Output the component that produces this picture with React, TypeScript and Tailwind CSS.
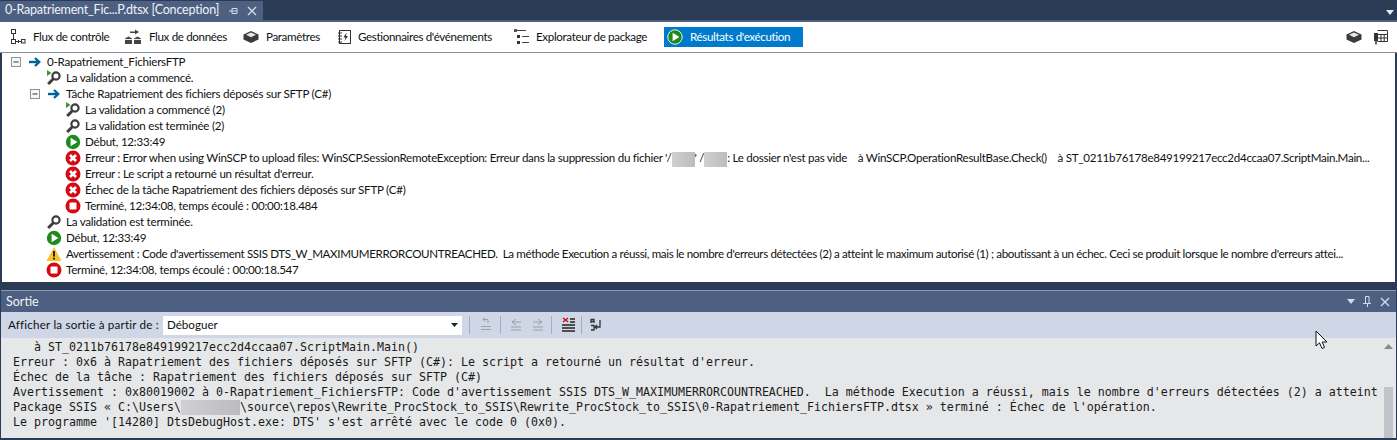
import type { ReactNode } from 'react'

function Expander({ className = '' }: { className?: string }) {
  return (
    <svg width="11" height="11" viewBox="0 0 11 11" className={className}>
      <rect x="0.5" y="0.5" width="9" height="9" fill="#f4f6f8" stroke="#8a93a3" />
      <path d="M2.5 5H7.5" stroke="#333" />
    </svg>
  )
}

function ArrowIcon() {
  return (
    <svg width="14" height="12" viewBox="0 0 14 12" fill="none" stroke="#00639c">
      <path d="M1 6H11" strokeWidth="2.4" />
      <path d="M7 2L11.2 6L7 10" strokeWidth="2.4" />
    </svg>
  )
}

function KeyIcon({ started }: { started?: boolean }) {
  return (
    <svg width="16" height="16" viewBox="0 0 16 16">
      <circle cx="10" cy="6" r="3.6" fill="none" stroke="#3d3d3d" strokeWidth="2.2" />
      <path d="M7.4 8.8L2.2 14" stroke="#3d3d3d" strokeWidth="3" />
      {started && <path d="M1 0V6L5.5 3Z" fill="#2f9e2f" />}
    </svg>
  )
}

function PlayIcon({ ring }: { ring?: boolean }) {
  return (
    <svg width="16" height="16" viewBox="0 0 16 16">
      <circle cx="8" cy="8" r="7.2" fill="#1e8a1e" stroke={ring ? '#e8f2e8' : 'none'} strokeWidth={ring ? 1 : 0} />
      <path d="M5.6 3.8V12.2L12.4 8Z" fill="#fff" />
    </svg>
  )
}

function ErrorIcon() {
  return (
    <svg width="16" height="16" viewBox="0 0 16 16">
      <circle cx="8" cy="8" r="7.5" fill="#d60a14" />
      <path d="M5 5L11 11M11 5L5 11" stroke="#fff" strokeWidth="2.6" />
    </svg>
  )
}

function StopIcon() {
  return (
    <svg width="16" height="16" viewBox="0 0 16 16">
      <circle cx="8" cy="8" r="7.5" fill="#d60a14" />
      <rect x="4.5" y="4.5" width="7" height="7" rx="1" fill="#fff" />
    </svg>
  )
}

function WarnIcon() {
  return (
    <svg width="16" height="16" viewBox="0 0 16 16">
      <path d="M8 1L15.5 15H0.5Z" fill="#f7c325" />
      <path d="M8 5V10.5M8 11.8V13.6" stroke="#222" strokeWidth="2" />
    </svg>
  )
}

function FlowIcon() {
  return (
    <svg width="16" height="16" viewBox="0 0 16 16" fill="none" stroke="#333">
      <rect x="1.5" y="0.5" width="4" height="4" />
      <rect x="1.5" y="10.5" width="4" height="4" />
      <rect x="11.5" y="10.5" width="3.5" height="3.5" />
      <path d="M3.5 5V10M6 12.5H11M8.5 11V14" />
    </svg>
  )
}

function DataIcon() {
  return (
    <svg width="16" height="16" viewBox="0 0 16 16">
      <path d="M5 2.5H10V0.5L14 3L10 5.5V4H5Z" fill="#444" />
      <path d="M0 9.5L3.5 7.5L7 9.5V15H0ZM9 9.5L12.5 7.5L16 9.5V15H9Z" fill="#444" />
      <path d="M0 10.5H7M9 10.5H16" stroke="#eee" />
    </svg>
  )
}

function BoxIcon() {
  return (
    <svg width="16" height="14" viewBox="0 0 16 14">
      <path d="M8 1L15.5 4.5V9.5L8 13L0.5 9.5V4.5Z" fill="#3b3b3b" />
      <path d="M8 2.5L13 4.8L8 7.2L3 4.8Z" fill="#e8e8e8" />
    </svg>
  )
}

function HandlerIcon() {
  return (
    <svg width="13" height="14" viewBox="0 0 13 14">
      <rect x="1.5" y="0.5" width="11" height="13" fill="none" stroke="#333" />
      <path d="M0 3H4M0 6H4M0 9H4M0 12H4" stroke="#333" />
      <path d="M8.5 2.5L5.5 7.5H7.5L6.5 11L10 6H8Z" fill="#333" />
    </svg>
  )
}

function ExplorerIcon() {
  return (
    <svg width="15" height="15" viewBox="0 0 15 15">
      <rect x="0" y="0" width="3" height="3" fill="#555" />
      <rect x="3" y="6" width="3" height="3" fill="#333" />
      <rect x="3" y="12" width="3" height="3" fill="#333" />
      <path d="M3 1.5H12M8 7.5H15M8 13.5H15" stroke="#444" />
    </svg>
  )
}

function GridIcon() {
  return (
    <svg width="15" height="15" viewBox="0 0 15 15" fill="none" stroke="#333">
      <path d="M4.5 0.5H14.5V11.5H4.5M4.5 4.5H14.5M4.5 8H14.5M8 4.5V11.5M11.2 4.5V11.5" />
      <path d="M3 3V11" stroke="#333" strokeWidth="4" />
      <path d="M3 11V14.5" strokeWidth="1.5" />
    </svg>
  )
}

function Redacted({ w, h = 'h-[15px]' }: { w: string; h?: string }) {
  return <span className={`inline-block align-middle bg-gradient-to-r from-[#d0d0d2] to-[#bcbcbe] ${w} ${h}`} />
}

type Row = { level: number; icon: ReactNode; text: ReactNode; toggle?: boolean; textCls?: string }

const rows: Row[] = [
  { level: 0, toggle: true, icon: <ArrowIcon />, text: '0-Rapatriement_FichiersFTP' },
  { level: 1, icon: <KeyIcon started />, text: 'La validation a commencé.' },
  { level: 1, toggle: true, icon: <ArrowIcon />, text: 'Tâche Rapatriement des fichiers déposés sur SFTP (C#)' },
  { level: 2, icon: <KeyIcon started />, text: 'La validation a commencé (2)' },
  { level: 2, icon: <KeyIcon />, text: 'La validation est terminée (2)' },
  { level: 2, icon: <PlayIcon />, text: 'Début, 12:33:49' },
  {
    level: 2,
    icon: <ErrorIcon />,
    textCls: 'tracking-[-0.29px]',
    text: (
      <>
        Erreur : Error when using WinSCP to upload files: WinSCP.SessionRemoteException: Erreur dans la suppression du fichier '/<Redacted w="w-[23px]" />' /<Redacted w="w-[23px]" />: Le dossier n'est pas vide    à WinSCP.OperationResultBase.Check()    à ST_0211b76178e849199217ecc2d4ccaa07.ScriptMain.Main...
      </>
    ),
  },
  { level: 2, icon: <ErrorIcon />, text: "Erreur : Le script a retourné un résultat d'erreur." },
  { level: 2, icon: <ErrorIcon />, text: 'Échec de la tâche Rapatriement des fichiers déposés sur SFTP (C#)' },
  { level: 2, icon: <StopIcon />, text: 'Terminé, 12:34:08, temps écoulé : 00:00:18.484' },
  { level: 1, icon: <KeyIcon />, text: 'La validation est terminée.' },
  { level: 1, icon: <PlayIcon />, text: 'Début, 12:33:49' },
  {
    level: 1,
    icon: <WarnIcon />,
    textCls: 'tracking-[-0.36px]',
    text: "Avertissement : Code d'avertissement SSIS DTS_W_MAXIMUMERRORCOUNTREACHED.  La méthode Execution a réussi, mais le nombre d'erreurs détectées (2) a atteint le maximum autorisé (1) ; aboutissant à un échec. Ceci se produit lorsque le nombre d'erreurs attei...",
  },
  { level: 1, icon: <StopIcon />, text: 'Terminé, 12:34:08, temps écoulé : 00:00:18.547' },
]

const tabs = [
  { label: 'Flux de contrôle', icon: <FlowIcon />, cls: 'w-[115px] gap-[7px]' },
  { label: 'Flux de données', icon: <DataIcon />, cls: 'w-[118px] gap-[8px]' },
  { label: 'Paramètres', icon: <BoxIcon />, cls: 'w-[95px] gap-[7px]' },
  { label: "Gestionnaires d'événements", icon: <HandlerIcon />, cls: 'w-[176px] gap-[7px]' },
  { label: 'Explorateur de package', icon: <ExplorerIcon />, cls: 'w-[150px] gap-[7px]' },
]

const outputLines: ReactNode[] = [
  '   à ST_0211b76178e849199217ecc2d4ccaa07.ScriptMain.Main()',
  "Erreur : 0x6 à Rapatriement des fichiers déposés sur SFTP (C#): Le script a retourné un résultat d'erreur.",
  'Échec de la tâche : Rapatriement des fichiers déposés sur SFTP (C#)',
  "Avertissement : 0x80019002 à 0-Rapatriement_FichiersFTP: Code d'avertissement SSIS DTS_W_MAXIMUMERRORCOUNTREACHED.  La méthode Execution a réussi, mais le nombre d'erreurs détectées (2) a atteint",
  <>
    Package SSIS « C:\Users\<Redacted w="w-[59px]" />\source\repos\Rewrite_ProcStock_to_SSIS\Rewrite_ProcStock_to_SSIS\0-Rapatriement_FichiersFTP.dtsx » terminé : Échec de l'opération.
  </>,
  "Le programme '[14280] DtsDebugHost.exe: DTS' s'est arrêté avec le code 0 (0x0).",
]

export default function App() {
  return (
    <div className="relative w-[1397px] h-[440px] overflow-hidden bg-[#2b3a55] font-['Lato',sans-serif] text-[11.6px] text-[#111]">
      {/* Document tab */}
      <div className="flex h-[20px] items-end justify-between pr-[2px]">
        <div className="flex h-[19px] w-[263px] items-center bg-[#4d6082] pl-[5px] text-[12.5px] tracking-[-0.2px] text-[#f0f2f6]">
          <span className="w-[222px] whitespace-pre">0-Rapatriement_Fic...P.dtsx [Conception]</span>
          <svg width="10" height="10" viewBox="0 0 10 10" className="ml-[2px]" stroke="#d5dbe6" fill="none">
            <path d="M0 5H3M3 2.5V7.5H8V2.5ZM3 5H8" />
          </svg>
          <svg width="10" height="10" viewBox="0 0 10 10" className="ml-[8px]" stroke="#d5dbe6" strokeWidth="1.4">
            <path d="M1 1L9 9M9 1L1 9" />
          </svg>
        </div>
        <svg width="8" height="5" viewBox="0 0 8 5" className="mb-[5px] mr-[1px]">
          <path d="M0 0H8L4 5Z" fill="#e5e9f0" />
        </svg>
      </div>

      {/* Designer */}
      <div className="h-[2px] bg-[#4d6082]" />
      <div className="flex h-[31px] items-center justify-between border-b border-[#8a8f9a] bg-white pl-[10px] pr-[9px] tracking-[-0.35px]">
        <div className="flex items-center">
          {tabs.map((t) => (
            <div key={t.label} className={`flex items-center whitespace-nowrap ${t.cls}`}>
              {t.icon}
              <span className="pb-[1px]">{t.label}</span>
            </div>
          ))}
          <div className="flex h-[20px] w-[139px] items-center gap-[7px] whitespace-nowrap bg-[#007acc] pl-[3px] text-white">
            <PlayIcon ring />
            <span className="pb-[1px]">Résultats d'exécution</span>
          </div>
        </div>
        <div className="flex items-center gap-[11px]">
          <BoxIcon />
          <GridIcon />
        </div>
      </div>

      {/* Results tree */}
      <div className="mx-[2px] h-[229px] overflow-hidden bg-white pl-[9px] pr-[20px] pt-[1px] tracking-[-0.24px]">
        {rows.map((r, i) => (
          <div
            key={i}
            className={`flex h-[16px] items-center whitespace-pre ${r.level === 0 ? 'pl-0' : r.level === 1 ? (r.toggle ? 'pl-[19px]' : 'pl-[35px]') : 'pl-[54px]'}`}
          >
            {r.toggle && <Expander className="mr-[6px] shrink-0" />}
            <span className={`flex shrink-0 justify-center ${r.toggle ? 'w-[14px] mr-[5px]' : 'w-[16px] mr-[4px]'}`}>{r.icon}</span>
            <span className={r.textCls}>{r.text}</span>
          </div>
        ))}
      </div>

      <div className="h-[8px] bg-[#2b3a55]" />

      {/* Output window */}
      <div className="mx-[1px] flex h-[148px] flex-col border-t border-[#8b9ab8]">
        <div className="flex h-[21px] items-center justify-between bg-[#4d6082] pl-[5px] pr-[6px] text-[12.5px] text-[#f0f2f6]">
          <span className="pt-[1px]">Sortie</span>
          <div className="flex items-center gap-[8px]">
            <svg width="8" height="5" viewBox="0 0 8 5">
              <path d="M0 0H8L4 5Z" fill="#d5dbe6" />
            </svg>
            <svg width="9" height="11" viewBox="0 0 9 11" stroke="#d5dbe6" fill="none">
              <path d="M0 7.5H8M2.5 0.5H6V7.5H2.5ZM4.5 8V11" />
            </svg>
            <svg width="10" height="10" viewBox="0 0 10 10" stroke="#d5dbe6" strokeWidth="1.4">
              <path d="M1 1L9 9M9 1L1 9" />
            </svg>
          </div>
        </div>
        <div className="flex h-[26px] items-center bg-[#cfd6e5] pl-[7px]">
          <span className="w-[155px] whitespace-pre tracking-[0.2px]">Afficher la sortie à partir de :</span>
          <div className="flex h-[19px] w-[299px] items-center justify-between bg-white pl-[4px] pr-[4px]">
            <span>Déboguer</span>
            <svg width="7" height="4" viewBox="0 0 7 4">
              <path d="M0 0H7L3.5 4Z" fill="#222" />
            </svg>
          </div>
          <div className="ml-[7px] h-[18px] w-px bg-[#a5adbd]" />
          <svg width="12" height="16" viewBox="0 0 12 16" className="ml-[10px]" fill="none" stroke="#9aa1ae">
            <path d="M3 2.5H8V6M3 2.5L5 1M3 2.5L5 4.5M1 9.5H11M1 12.5H11" />
          </svg>
          <div className="ml-[8px] h-[18px] w-px bg-[#a5adbd]" />
          <svg width="12" height="14" viewBox="0 0 12 14" className="ml-[9px]" fill="none" stroke="#9aa1ae">
            <path d="M6 1L2 4L6 7M2 4H11M1 9H11M1 12H11" />
          </svg>
          <svg width="12" height="14" viewBox="0 0 12 14" className="ml-[10px]" fill="none" stroke="#9aa1ae">
            <path d="M6 1L10 4L6 7M10 4H1M1 9H11M1 12H11" />
          </svg>
          <div className="ml-[7px] h-[18px] w-px bg-[#a5adbd]" />
          <svg width="14" height="16" viewBox="0 0 14 16" className="ml-[9px]" fill="none">
            <path d="M2 1L7 5M7 1L2 5" stroke="#d01010" strokeWidth="1.5" />
            <path d="M9 2H14M9 5H14M1 8H14M1 11H14M1 14H14" stroke="#222" strokeWidth="1.3" />
          </svg>
          <div className="ml-[6px] h-[18px] w-px bg-[#a5adbd]" />
          <svg width="14" height="14" viewBox="0 0 14 14" className="ml-[8px]" fill="none" stroke="#333" strokeWidth="1.3">
            <path d="M1 5V1.5H4V5M1 3.5H4M1 7.5H4V12H1M10 2V9H5M7 7L5 9L7 11" />
          </svg>
        </div>
        <div className="flex min-h-0 flex-1 bg-[#e6e7e8]">
          <div className="min-w-0 flex-1 overflow-hidden whitespace-pre pl-[12px] pt-[2px] font-['DejaVu_Sans_Mono',monospace] text-[11.64px] leading-[15px] text-[#1a1a1a]">
            {outputLines.map((line, i) => (
              <div key={i} className="h-[15px]">
                {line}
              </div>
            ))}
          </div>
          <div className="flex w-[13px] shrink-0 flex-col items-center pt-[6px] mr-[1px]">
            <svg width="9" height="5" viewBox="0 0 9 5">
              <path d="M4.5 0L9 5H0Z" fill="#86898e" />
            </svg>
            <div className="mt-[38px] w-[9px] flex-1 bg-[#c2c3c9]" />
          </div>
        </div>
      </div>

      {/* Mouse pointer */}
      <svg width="14" height="21" viewBox="0 0 14 21" className="absolute left-[1315px] top-[330px]">
        <path d="M1 1V16L4.5 12.8L7 18.5L9.5 17.4L7.2 12H12Z" fill="#fff" stroke="#111" />
      </svg>
    </div>
  )
}
